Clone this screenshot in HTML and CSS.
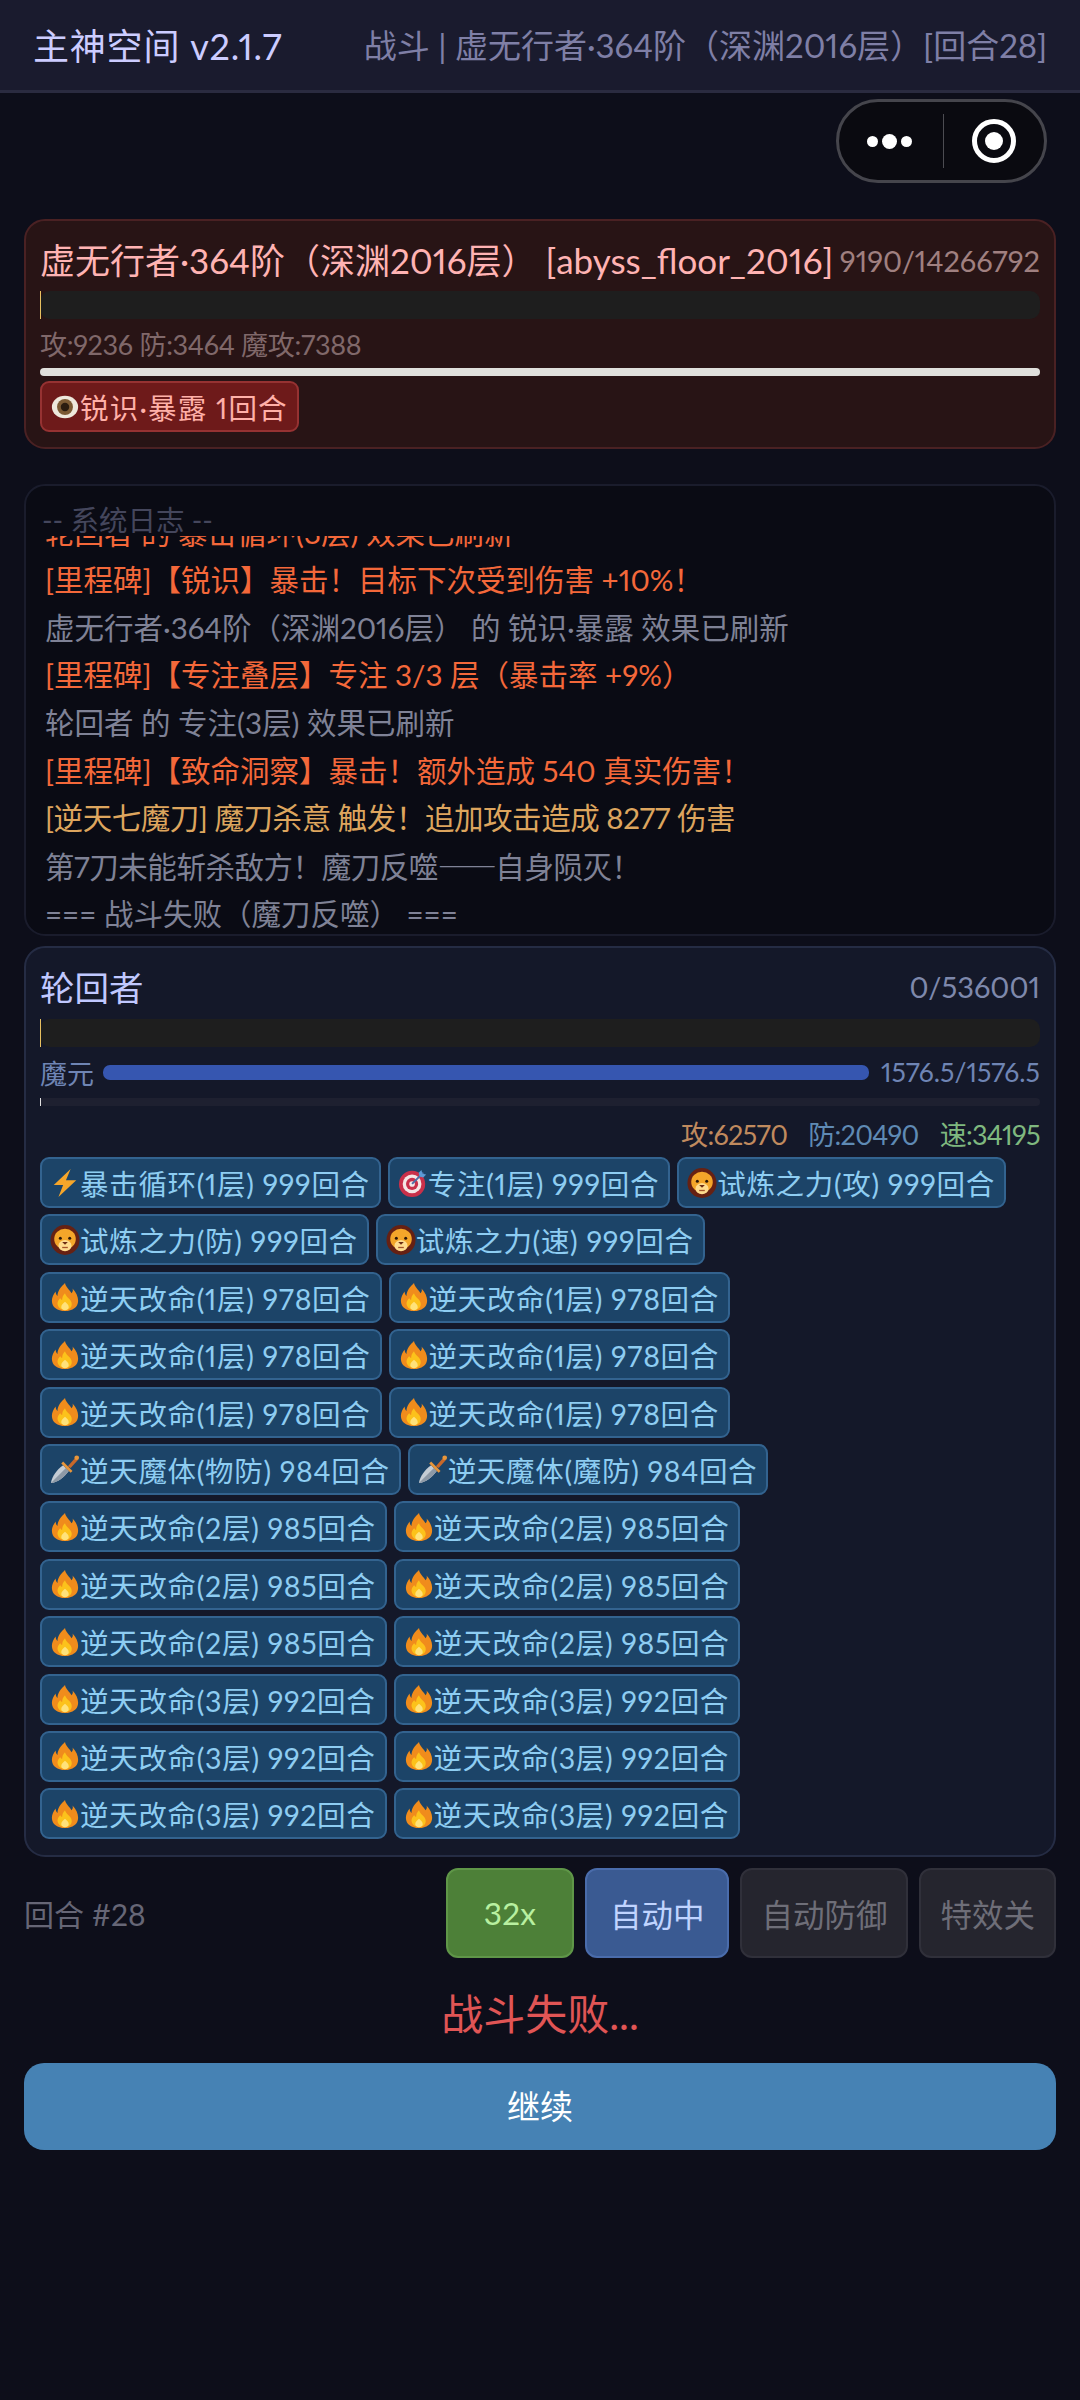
FILE: index.html
```html
<!DOCTYPE html>
<html lang="zh-CN">
<head>
    <meta charset="UTF-8">
    <meta name="viewport" content="width=device-width, initial-scale=1.0">
    <title>主神空间</title>
    <link rel="stylesheet" href="styles.css">
</head>
<body>
    <svg class="icon-defs" aria-hidden="true">
        <symbol id="fire" viewBox="0 0 32 32">
            <path d="M16 1c1 5 5 7 7 11 1-1 2-3 1-5 4 4 6 9 6 13 0 7-6 11-14 11S2 27 2 20c0-4 2-7 4-10 0 2 1 4 2 5 0-6 4-10 8-14z" fill="#f08c1c"/>
            <path d="M16 12c1 4 6 6 7 10 1 5-3 8-7 8s-8-3-8-7c0-2 1-4 3-6 0 1 1 2 2 2 0-3 1-5 3-7z" fill="#fcc21b"/>
            <path d="M16 21c2 2 4 3 4 6 0 2-2 3-4 3s-4-1-4-3c0-3 2-4 4-6z" fill="#ffe27a"/>
        </symbol>
        <symbol id="lion" viewBox="0 0 32 32">
            <ellipse cx="16" cy="16" rx="15.5" ry="16" fill="#662113"/>
            <ellipse cx="16" cy="15" rx="11.5" ry="11" fill="#f4a62a"/>
            <ellipse cx="16" cy="22" rx="7" ry="6" fill="#ffdc8e"/>
            <circle cx="11" cy="14" r="1.6" fill="#2b1608"/>
            <circle cx="21" cy="14" r="1.6" fill="#2b1608"/>
            <path d="M13 18h6l-3 3z" fill="#6b2c14"/>
            <path d="M13 24h6" stroke="#a5532a" stroke-width="1.4"/>
        </symbol>
        <symbol id="bolt" viewBox="0 0 32 32">
            <path d="M22 1 4 18h10L9 31l19-18H17z" fill="#f6a62a"/>
        </symbol>
        <symbol id="target" viewBox="0 0 32 32">
            <circle cx="15" cy="17" r="14" fill="#c9304a"/>
            <circle cx="15" cy="17" r="10" fill="#f5e6e6"/>
            <circle cx="15" cy="17" r="6.5" fill="#c9304a"/>
            <circle cx="15" cy="17" r="3" fill="#f5e6e6"/>
            <path d="M15 17 27 5" stroke="#4a6fa8" stroke-width="2"/>
            <path d="M25 2l1 4 4 1-3 3-4-1-1-4z" fill="#5c9bd6"/>
        </symbol>
        <symbol id="dagger" viewBox="0 0 32 32">
            <path d="M1 31c1-7 6-14 13-19l6 6C15 25 8 30 1 31z" fill="#c4ccd4"/>
            <path d="M1 31 17 15l3 3C15 25 8 30 1 31z" fill="#8d99a6"/>
            <path d="M12 10l10 10 2-2L14 8z" fill="#e8963a"/>
            <path d="M19 13l8-9 3 2-8 9z" fill="#c8682a"/>
            <circle cx="28.5" cy="4" r="2.5" fill="#e8963a"/>
        </symbol>
        <symbol id="eye" viewBox="0 0 32 32">
            <ellipse cx="16" cy="16" rx="14" ry="12" fill="#eee8dc"/>
            <circle cx="16" cy="16" r="8.5" fill="#7b5a34"/>
            <circle cx="16" cy="16" r="4.5" fill="#2a1c10"/>
        </symbol>
    </svg>

    <header class="top-bar">
        <h1 class="top-title">主神空间 v2.1.7</h1>
        <span class="top-status">战斗 | 虚无行者·364阶（深渊2016层）[回合28]</span>
    </header>

    <!-- 小程序胶囊按钮 -->
    <div class="capsule">
        <div class="capsule-dots"><i></i><b></b><i></i></div>
        <span class="capsule-line"></span>
        <div class="capsule-target"><span></span></div>
    </div>

    <main class="battle">
        <section class="card enemy-card">
            <div class="name-row">
                <span class="enemy-name">虚无行者·364阶（深渊2016层） [abyss_floor_2016]</span>
                <span class="enemy-hp">9190/14266792</span>
            </div>
            <div class="hp-track"><div class="hp-fill"></div></div>
            <div class="enemy-stats">攻:9236 防:3464 魔攻:7388</div>
            <div class="white-bar"></div>
            <div class="buff-list">
                <span class="buff buff-red"><svg class="emoji"><use href="#eye"/></svg>锐识·暴露 1回合</span>
            </div>
        </section>

        <section class="card log-card">
            <div class="log-title">-- 系统日志 --</div>
            <div class="log-lines">
                <p class="log-mile">轮回者 的 暴击循环(3层) 效果已刷新</p>
                <p class="log-mile">[里程碑]【锐识】暴击！目标下次受到伤害 +10%！</p>
                <p>虚无行者·364阶（深渊2016层） 的 锐识·暴露 效果已刷新</p>
                <p class="log-mile">[里程碑]【专注叠层】专注 3/3 层（暴击率 +9%）</p>
                <p>轮回者 的 专注(3层) 效果已刷新</p>
                <p class="log-mile">[里程碑]【致命洞察】暴击！额外造成 540 真实伤害！</p>
                <p class="log-gold log-tight">[逆天七魔刀] 魔刀杀意 触发！追加攻击造成 8277 伤害</p>
                <p class="log-tight">第7刀未能斩杀敌方！魔刀反噬<span class="cjk-dash">——</span>自身陨灭！</p>
                <p>=== 战斗失败（魔刀反噬） ===</p>
            </div>
        </section>

        <section class="card player-card">
            <div class="name-row player-row">
                <span class="player-name">轮回者</span>
                <span class="player-hp">0/536001</span>
            </div>
            <div class="hp-track"><div class="hp-fill"></div></div>
            <div class="mana-row">
                <span class="mana-label">魔元</span>
                <div class="mana-track"></div>
                <span class="mana-value">1576.5/1576.5</span>
            </div>
            <div class="thin-track"><div class="thin-fill"></div></div>
            <div class="player-stats">
                <span class="stat-atk">攻:62570</span>
                <span class="stat-def">防:20490</span>
                <span class="stat-spd">速:34195</span>
            </div>
            <div class="buff-list">
                <span class="buff"><svg class="emoji"><use href="#bolt"/></svg>暴击循环(1层) 999回合</span>
                <span class="buff"><svg class="emoji"><use href="#target"/></svg>专注(1层) 999回合</span>
                <span class="buff"><svg class="emoji"><use href="#lion"/></svg>试炼之力(攻) 999回合</span>
                <span class="buff"><svg class="emoji"><use href="#lion"/></svg>试炼之力(防) 999回合</span>
                <span class="buff"><svg class="emoji"><use href="#lion"/></svg>试炼之力(速) 999回合</span>
                <span class="buff"><svg class="emoji"><use href="#fire"/></svg>逆天改命(1层) 978回合</span>
                <span class="buff"><svg class="emoji"><use href="#fire"/></svg>逆天改命(1层) 978回合</span>
                <span class="buff"><svg class="emoji"><use href="#fire"/></svg>逆天改命(1层) 978回合</span>
                <span class="buff"><svg class="emoji"><use href="#fire"/></svg>逆天改命(1层) 978回合</span>
                <span class="buff"><svg class="emoji"><use href="#fire"/></svg>逆天改命(1层) 978回合</span>
                <span class="buff"><svg class="emoji"><use href="#fire"/></svg>逆天改命(1层) 978回合</span>
                <span class="buff"><svg class="emoji"><use href="#dagger"/></svg>逆天魔体(物防) 984回合</span>
                <span class="buff"><svg class="emoji"><use href="#dagger"/></svg>逆天魔体(魔防) 984回合</span>
                <span class="buff"><svg class="emoji"><use href="#fire"/></svg>逆天改命(2层) 985回合</span>
                <span class="buff"><svg class="emoji"><use href="#fire"/></svg>逆天改命(2层) 985回合</span>
                <span class="buff"><svg class="emoji"><use href="#fire"/></svg>逆天改命(2层) 985回合</span>
                <span class="buff"><svg class="emoji"><use href="#fire"/></svg>逆天改命(2层) 985回合</span>
                <span class="buff"><svg class="emoji"><use href="#fire"/></svg>逆天改命(2层) 985回合</span>
                <span class="buff"><svg class="emoji"><use href="#fire"/></svg>逆天改命(2层) 985回合</span>
                <span class="buff"><svg class="emoji"><use href="#fire"/></svg>逆天改命(3层) 992回合</span>
                <span class="buff"><svg class="emoji"><use href="#fire"/></svg>逆天改命(3层) 992回合</span>
                <span class="buff"><svg class="emoji"><use href="#fire"/></svg>逆天改命(3层) 992回合</span>
                <span class="buff"><svg class="emoji"><use href="#fire"/></svg>逆天改命(3层) 992回合</span>
                <span class="buff"><svg class="emoji"><use href="#fire"/></svg>逆天改命(3层) 992回合</span>
                <span class="buff"><svg class="emoji"><use href="#fire"/></svg>逆天改命(3层) 992回合</span>
            </div>
        </section>

        <div class="controls">
            <span class="round-label">回合 #28</span>
            <button class="ctl-btn ctl-speed">32x</button>
            <button class="ctl-btn ctl-auto">自动中</button>
            <button class="ctl-btn ctl-off">自动防御</button>
            <button class="ctl-btn ctl-off">特效关</button>
        </div>

        <div class="result-text">战斗失败...</div>
        <button class="continue-btn">继续</button>
    </main>
</body>
</html>
```

FILE: styles.css
```css
* {
    box-sizing: border-box;
}
body {
    margin: 0;
    position: relative;
    min-height: 2400px;
    background-color: #0d0e1a;
    font-family: Lato, "Noto Sans CJK SC", sans-serif;
    font-variant-numeric: proportional-nums;
    color: #ccc;
}
.icon-defs {
    display: none;
}
.top-bar {
    display: flex;
    justify-content: space-between;
    align-items: center;
    height: 93px;
    padding: 0 33px 3px;
    background: #1a1b2e;
    border-bottom: 3px solid #2a2b40;
}
.top-title {
    margin: 0;
    font-size: 36px;
    font-weight: 400;
    letter-spacing: 0.8px;
    color: #ccccff;
}
.top-status {
    font-size: 33px;
    color: #7f7fa6;
}
.capsule {
    position: absolute;
    top: 99px;
    left: 836px;
    width: 211px;
    height: 84px;
    display: flex;
    align-items: center;
    background: #0a0a10;
    border: 3px solid #45454c;
    border-radius: 42px;
}
.capsule-dots {
    flex: 1;
    display: flex;
    justify-content: center;
    align-items: center;
    gap: 4px;
    padding-right: 4px;
}
.capsule-dots i {
    width: 11px;
    height: 11px;
    border-radius: 50%;
    background: #fff;
}
.capsule-dots b {
    width: 15px;
    height: 15px;
    border-radius: 50%;
    background: #fff;
}
.capsule-line {
    width: 1px;
    height: 54px;
    background: #4c4c52;
}
.capsule-target {
    flex: 1;
    display: flex;
    justify-content: center;
}
.capsule-target span {
    display: flex;
    width: 44px;
    height: 44px;
    border: 5px solid #fff;
    border-radius: 50%;
}
.capsule-target span::after {
    content: "";
    width: 18px;
    height: 18px;
    margin: auto;
    border-radius: 50%;
    background: #fff;
}
.battle {
    padding: 126px 24px 0;
}
.card {
    border-radius: 21px;
    border: 2px solid #23263c;
    padding: 0 14px;
}
.name-row {
    display: flex;
    justify-content: space-between;
    align-items: center;
}
.enemy-card {
    height: 230px;
    padding-top: 16px;
    background: #281415;
    border-color: #4a2123;
}
.enemy-name {
    font-size: 35px;
    line-height: 46px;
    color: #ffb3b3;
    white-space: nowrap;
}
.enemy-hp {
    font-size: 29px;
    color: #a08080;
}
.hp-track {
    height: 28px;
    margin-top: 8px;
    background: #1e1e1e;
    border-radius: 10px;
}
.hp-fill {
    width: 1px;
    height: 100%;
    background: #e8c060;
}
.enemy-stats {
    margin-top: 8px;
    font-size: 27px;
    line-height: 36px;
    letter-spacing: -0.3px;
    color: #80686a;
}
.white-bar {
    height: 8px;
    margin-top: 5px;
    background: #e0e0dc;
    border-radius: 4px;
}
.buff-list {
    display: flex;
    flex-wrap: wrap;
    gap: 6.4px 7px;
}
.enemy-card .buff-list {
    margin-top: 5px;
}
.buff {
    display: inline-flex;
    align-items: center;
    height: 51px;
    padding: 0 9px 0 8px;
    font-size: 28.5px;
    letter-spacing: 0.7px;
    color: #8ecdf2;
    background: #1c4468;
    border: 2px solid #33638f;
    border-radius: 9px;
    white-space: nowrap;
}
.buff-red {
    letter-spacing: 1.2px;
    color: #ffb0a8;
    background: #6e1a1a;
    border-color: #963232;
}
.emoji {
    width: 30px;
    height: 30px;
    flex-shrink: 0;
}
.log-card {
    height: 452px;
    margin-top: 35px;
    padding: 0 19px;
    background: #0a0b14;
    border-color: #1a1c2c;
    display: flex;
    flex-direction: column;
    overflow: hidden;
}
.log-title {
    height: 50px;
    margin-left: -3px;
    padding-top: 16px;
    font-size: 28.5px;
    line-height: 36px;
    color: #44465c;
}
.log-lines {
    flex: 1;
    min-height: 0;
    overflow: hidden;
    display: flex;
    flex-direction: column;
    justify-content: flex-end;
    margin-bottom: -4px;
}
.log-lines p {
    flex-shrink: 0;
    margin: 0;
    font-size: 29.5px;
    line-height: 47.6px;
    color: #7f8296;
    white-space: nowrap;
}
.log-lines .log-mile {
    color: #f4683a;
}
.log-lines .log-gold {
    color: #dda55e;
}
.log-lines .log-tight {
    letter-spacing: -0.45px;
}
.cjk-dash {
    font-family: "Noto Sans CJK SC", sans-serif;
    letter-spacing: -1.5px;
}
.player-card {
    height: 911px;
    margin-top: 10px;
    padding-top: 13px;
    background: #141829;
    border-color: #252c44;
}
.player-row {
    height: 50px;
}
.player-name {
    font-size: 34.5px;
    color: #c0c8ff;
}
.player-hp {
    font-size: 29px;
    color: #7e88ac;
}
.mana-row {
    display: flex;
    align-items: center;
    gap: 9px;
    height: 40px;
    margin-top: 5px;
}
.mana-label {
    font-size: 27px;
    color: #6f85b4;
}
.mana-track {
    flex: 1;
    height: 15px;
    margin-right: 3px;
    background: #3656b0;
    border-radius: 7px;
}
.mana-value {
    font-size: 26.5px;
    color: #6f85b4;
}
.thin-track {
    height: 8px;
    margin-top: 6px;
    background: #1e2030;
    border-radius: 4px;
}
.thin-fill {
    width: 1px;
    height: 100%;
    background: #e0e0e0;
}
.player-stats {
    display: flex;
    justify-content: flex-end;
    gap: 21px;
    height: 44px;
    margin-top: 5px;
    align-items: center;
    font-size: 27px;
    letter-spacing: -0.7px;
}
.stat-atk {
    color: #c08a5e;
}
.stat-def {
    color: #5f8ab4;
}
.stat-spd {
    color: #7fb87f;
}
.player-card .buff-list {
    margin-top: 2px;
}
.controls {
    display: flex;
    align-items: center;
    gap: 11px;
    margin-top: 11px;
}
.round-label {
    flex: 1;
    font-size: 30px;
    color: #666676;
}
.ctl-btn {
    height: 90px;
    padding: 0 23px;
    font-family: inherit;
    font-size: 31.5px;
    border-radius: 12px;
    border: 2px solid;
}
.ctl-speed {
    padding: 0 36px;
    color: #b8f0a0;
    background: #4d8038;
    border-color: #5f9648;
}
.ctl-auto {
    color: #c0d4ff;
    background: #3a5a92;
    border-color: #4a6cab;
}
.ctl-off {
    padding: 0 19px;
    color: #6e6e78;
    background: #25252e;
    border-color: #30303a;
}
.result-text {
    margin-top: 26px;
    text-align: center;
    font-size: 42px;
    line-height: 60px;
    color: #e05555;
}
.continue-btn {
    display: block;
    width: 100%;
    height: 87px;
    margin-top: 19px;
    padding-bottom: 4px;
    font-family: inherit;
    font-size: 33px;
    color: #fff;
    background: #4682b4;
    border: none;
    border-radius: 20px;
}
```
